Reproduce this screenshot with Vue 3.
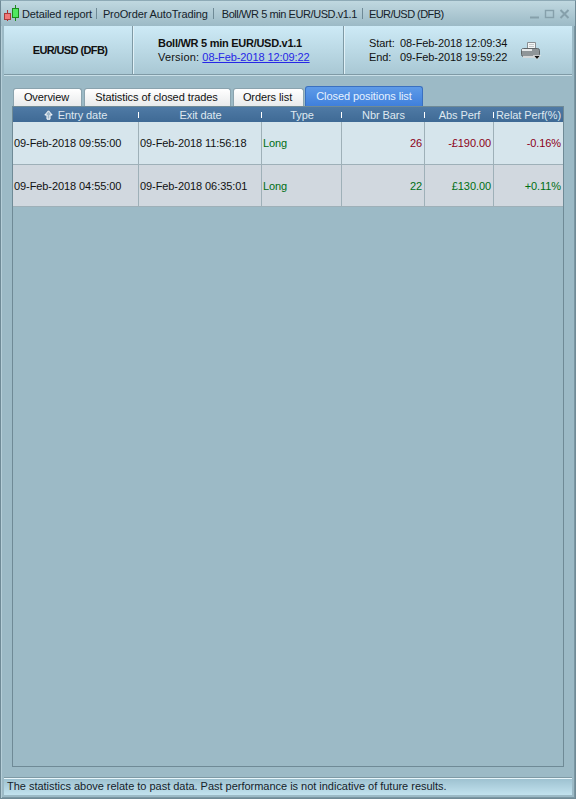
<script setup>
const tabs = [
  { label: 'Overview', width: 69 },
  { label: 'Statistics of closed trades', width: 147 },
  { label: 'Orders list', width: 71 },
  { label: 'Closed positions list', width: 118, active: true }
]

const titleParts = [
  { label: 'ProOrder AutoTrading', cls: 'part-pro' },
  { label: 'Boll/WR 5 min EUR/USD.v1.1', cls: 'part-system' },
  { label: 'EUR/USD (DFB)', cls: 'part-pair' }
]

const columns = ['Entry date', 'Exit date', 'Type', 'Nbr Bars', 'Abs Perf', 'Relat Perf(%)']

const rows = [
  { entry: '09-Feb-2018 09:55:00', exit: '09-Feb-2018 11:56:18', type: 'Long', bars: '26', abs: '-£190.00', rel: '-0.16%', loss: true },
  { entry: '09-Feb-2018 04:55:00', exit: '09-Feb-2018 06:35:01', type: 'Long', bars: '22', abs: '£130.00', rel: '+0.11%', loss: false }
]
</script>

<template>
  <div class="window">
    <div class="titlebar">
      <svg class="logo" width="18" height="21" viewBox="0 0 18 21">
        <path d="M4.500 7v3M4.500 16v2" stroke="#b03030" />
        <rect x="1.500" y="10.500" width="6" height="6" fill="#f07878" stroke="#a83a3a" />
        <path d="M12.500 2v4M12.500 14v4" stroke="#1d8a1d" />
        <rect x="9.500" y="5.500" width="6" height="9" fill="#50e860" stroke="#1d8a1d" />
      </svg>
      <span class="title-first">Detailed report</span>
      <template v-for="part in titleParts" :key="part.label">
        <i class="title-sep"></i>
        <span :class="part.cls">{{ part.label }}</span>
      </template>
      <div class="win-buttons">
        <svg width="40" height="12" viewBox="0 0 40 12">
          <path d="M0 9.500h9" stroke="#86a0ab" stroke-width="2" />
          <rect x="15.500" y="2.500" width="8" height="7" fill="none" stroke="#86a0ab" stroke-width="1.400" />
          <path d="M30.500 2l8 8M38.500 2l-8 8" stroke="#86a0ab" stroke-width="2" />
        </svg>
      </div>
    </div>

    <div class="info">
      <div class="info-pair">EUR/USD (DFB)</div>
      <div class="info-system">
        <strong>Boll/WR 5 min EUR/USD.v1.1</strong>
        <div><span class="version-label">Version:</span> <a class="version-link">08-Feb-2018 12:09:22</a></div>
      </div>
      <div class="info-dates">
        <div class="dates">
          <span>Start:</span><span>08-Feb-2018 12:09:34</span>
          <span>End:</span><span>09-Feb-2018 19:59:22</span>
        </div>
        <svg class="printer" width="20" height="18" viewBox="0 0 20 18">
          <path d="M6.500 .5h8v6h-8z" fill="#f4f6f6" stroke="#8a8f92" />
          <path d="M8 2.500h5M8 4.500h5" stroke="#c4c8ca" />
          <rect x="0.500" y="6.500" width="18" height="8" rx="2" fill="#8f9598" stroke="#5f6568" />
          <path d="M1 8h10" stroke="#e6e9ea" stroke-width="2" />
          <rect x="2" y="14" width="12" height="2" fill="#d4d7d8" />
          <path d="M12.500 13.500h7l-3.500 4z" fill="#111" stroke="#fff" stroke-width="0.700" />
        </svg>
      </div>
    </div>

    <div class="content">
      <div class="tabs">
        <div
          v-for="tab in tabs"
          :key="tab.label"
          class="tab"
          :class="{ active: tab.active }"
          :style="{ width: tab.width + 'px' }"
        >{{ tab.label }}</div>
      </div>
      <div class="panel">
        <div class="table">
          <div class="row head">
            <div v-for="(col, i) in columns" :key="col" class="head-cell">
              <svg v-if="i === 0" class="sort" width="9" height="10" viewBox="0 0 9 10">
                <path d="M4.500 .8L8.200 5H6v4.200H3V5H.8z" fill="#9db6c9" stroke="#fff" />
              </svg>
              {{ col }}
            </div>
          </div>
          <div v-for="r in rows" :key="r.entry" class="row body" :class="{ even: !r.loss }">
            <div class="cell">{{ r.entry }}</div>
            <div class="cell">{{ r.exit }}</div>
            <div class="cell long">{{ r.type }}</div>
            <div class="cell num" :class="r.loss ? 'neg' : 'pos'">{{ r.bars }}</div>
            <div class="cell num" :class="r.loss ? 'neg' : 'pos'">{{ r.abs }}</div>
            <div class="cell num" :class="r.loss ? 'neg' : 'pos'">{{ r.rel }}</div>
          </div>
        </div>
      </div>
    </div>

    <div class="status">The statistics above relate to past data. Past performance is not indicative of future results.</div>
  </div>
</template>

<style>
html, body {
  margin: 0;
  background: #9cbac6;
}
</style>

<style scoped>
.window {
  width: 576px;
  height: 799px;
  box-sizing: border-box;
  display: flex;
  flex-direction: column;
  background: #9cbac6;
  border: 1px solid #6f8a96;
  border-top-color: #8eaab6;
  box-shadow: inset 1px 0 #b5ced8, inset -1px -1px #7b97a3;
  font-family: "Liberation Sans", Arial, sans-serif;
  font-size: 11px;
  letter-spacing: -0.08px;
  color: #111;
  overflow: hidden;
}
.titlebar {
  height: 25px;
  flex: none;
  display: flex;
  align-items: center;
  padding-left: 2px;
  background: linear-gradient(#c0d8e0, #9cbac6);
  color: #15222a;
  white-space: nowrap;
}
.logo {
  margin-right: 1px;
}
.title-first {
  letter-spacing: -0.15px;
  margin-right: -1px;
}
.part-pro {
  letter-spacing: -0.12px;
}
.part-system {
  letter-spacing: -0.42px;
  margin-left: 2px;
}
.part-pair {
  letter-spacing: -0.55px;
}
.title-sep {
  width: 1px;
  height: 11px;
  margin: 0 6px 0 5px;
  background: #6f8a96;
}
.win-buttons {
  margin-left: auto;
  margin-right: 5px;
  display: flex;
}
.info {
  height: 48px;
  flex: none;
  margin: 0 3px;
  display: grid;
  grid-template-columns: 128px 211px 1fr;
  background: linear-gradient(#cdeaf6, #a9c8d4);
}
.info-pair {
  display: flex;
  align-items: center;
  justify-content: center;
  font-weight: bold;
  letter-spacing: -0.6px;
  padding-left: 4px;
}
.info-system {
  border-left: 1px solid #7f9aa5;
  box-shadow: inset 1px 0 #e0f1f7;
  padding-top: 10px;
  padding-left: 25px;
  line-height: 14px;
}
.info-system strong {
  letter-spacing: -0.27px;
}
.version-label {
  letter-spacing: 0.2px;
}
.version-link {
  color: #2626e6;
  text-decoration: underline;
}
.info-dates {
  border-left: 1px solid #7f9aa5;
  box-shadow: inset 1px 0 #e0f1f7;
  display: flex;
  padding-top: 10px;
  padding-left: 25px;
  line-height: 14px;
}
.dates {
  display: grid;
  grid-template-columns: 31px auto;
  height: 28px;
}
.printer {
  margin-left: 14px;
  margin-top: 6px;
}
.content {
  flex: 1;
  margin: 0 3px;
  padding: 11px 8px 0;
  min-height: 0;
  display: flex;
  flex-direction: column;
  border-top: 1px solid #7f9aa5;
  box-shadow: inset 0 1px #c8dfe7;
}
.tabs {
  display: flex;
  align-items: flex-end;
  height: 20px;
  flex: none;
  gap: 2px;
  padding-left: 1px;
}
.tab {
  height: 18px;
  box-sizing: border-box;
  flex: none;
  display: flex;
  align-items: center;
  justify-content: center;
  padding: 0 2px 2px 0;
  background: linear-gradient(#ffffff, #e8eaeb);
  border: 1px solid #8aa3ae;
  border-bottom: none;
  border-radius: 3px 3px 0 0;
  color: #111;
}
.tab.active {
  height: 20px;
  padding-right: 0;
  background: linear-gradient(#5e9be8, #3f7fdc);
  border-color: #3a70c0;
  color: #e6f2ff;
  margin-left: -1px;
}
.panel {
  flex: 1;
  min-height: 0;
  margin-bottom: 10px;
  border: 1px solid #6f8a96;
}
.row {
  display: grid;
  grid-template-columns: 126px 123px 80px 83px 69px 69px;
}
.head {
  height: 15px;
  background: linear-gradient(#4f7aa5, #3f6a95);
  color: #dfe8f0;
}
.head-cell {
  display: flex;
  align-items: center;
  justify-content: center;
  gap: 5px;
  position: relative;
  white-space: nowrap;
}
.head-cell:not(:last-child)::after {
  content: "";
  position: absolute;
  right: 0;
  top: 5px;
  width: 1px;
  height: 6px;
  background: #fff;
}
.sort {
  margin-left: -1px;
}
.body {
  height: 43px;
  background: #d6e5ec;
  border-bottom: 1px solid #9eb0b8;
  box-sizing: border-box;
}
.body.even {
  height: 42px;
  background: #d1d8df;
}
.cell {
  display: flex;
  align-items: center;
  padding: 0 1px;
  border-right: 1px solid #9eb0b8;
  white-space: nowrap;
}
.cell:last-child {
  border-right: none;
}
.num {
  justify-content: flex-end;
  padding-right: 2px;
}
.long,
.pos {
  color: #006e14;
}
.neg {
  color: #8c0018;
}
.status {
  height: 17px;
  flex: none;
  margin: 0 3px 3px;
  padding-left: 3px;
  line-height: 17px;
  letter-spacing: -0.02px;
  border-top: 1px solid #7f9aa5;
  box-shadow: inset 0 1px #e8f6fb;
  background: linear-gradient(#9cc0cf, #c2e2ee);
  color: #15222a;
  white-space: nowrap;
}
</style>
